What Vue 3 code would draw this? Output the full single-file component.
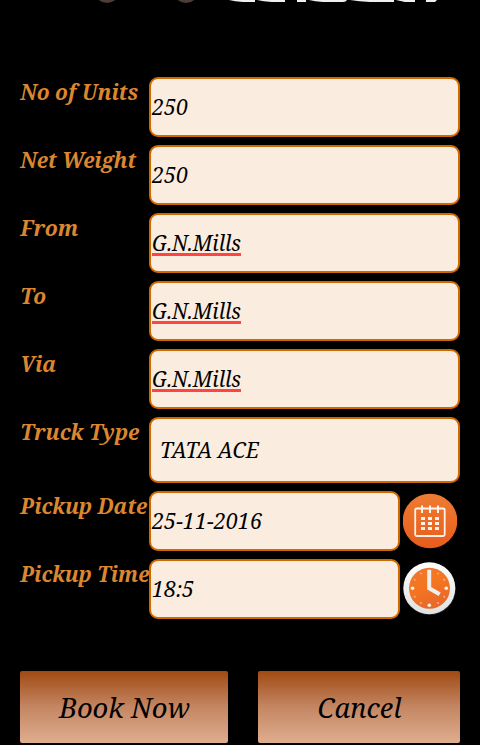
<script setup>
const fields = [
  { label: 'No of Units', lw: 118, value: '250', vw: 36 },
  { label: 'Net Weight', lw: 116, value: '250', vw: 36 },
  { label: 'From', lw: 58, value: 'G.N.Mills', vw: 89, flagged: true },
  { label: 'To', lw: 26, value: 'G.N.Mills', vw: 89, flagged: true },
  { label: 'Via', lw: 36, value: 'G.N.Mills', vw: 89, flagged: true },
  { label: 'Truck Type', lw: 119, value: 'TATA ACE', vw: 99, select: true },
  { label: 'Pickup Date', lw: 127, value: '25-11-2016', vw: 110, icon: 'calendar' },
  { label: 'Pickup Time', lw: 129, value: '18:5', vw: 42, icon: 'clock' },
]
const dots = [30, 60, 120, 150, 210, 240, 300, 330].map((a) => ({
  x: 26.5 + 17 * Math.sin((a * Math.PI) / 180),
  y: 26.5 - 17 * Math.cos((a * Math.PI) / 180),
}))
</script>

<template>
  <main class="screen">
    <svg class="banner" width="480" height="4" viewBox="0 0 480 4" aria-hidden="true">
      <g fill="#4d3c37"><circle cx="107" cy="-10" r="13" /><circle cx="186" cy="-10" r="13" /></g>
      <path fill="#edf2f1" d="M229 0H255V2H243Q235 1.5 229 0M257 0H285V2H272Q263 1.5 257 0M297 0H306V2H297ZM309 0H347Q346 2 343 2H323Q315 1.5 309 0M350 0H394V2H370Q359 1.5 350 0M396 0H415V2H405ZM426 0H437L435 2H426Z" />
    </svg>
    <form class="form" @submit.prevent>
      <div v-for="f in fields" :key="f.label" class="row" :class="{ tall: f.select }">
        <svg class="label" width="130" height="34"><text x="0.3" y="23.3" :textLength="f.lw" lengthAdjust="spacingAndGlyphs">{{ f.label }}</text></svg>
        <div class="field">
          <svg class="value" width="240" height="56">
            <text :x="f.select ? 9 : 1" :y="f.select ? 39.2 : 36.2" :textLength="f.vw" lengthAdjust="spacingAndGlyphs">{{ f.value }}</text>
            <rect v-if="f.flagged" x="1" y="38" width="89" height="3" fill="#ff4444" />
          </svg>
        </div>
        <svg v-if="f.icon === 'calendar'" class="icon" width="54" height="56" viewBox="0 0 54 56">
          <defs><linearGradient id="cal" x2="0" y2="1"><stop stop-color="#ee7c32" /><stop offset="1" stop-color="#e85c1c" /></linearGradient></defs>
          <circle cx="27" cy="28" r="27.3" fill="url(#cal)" />
          <rect x="12.2" y="15.5" width="29.5" height="27.5" rx="1.5" fill="none" stroke="#fff3e9" stroke-width="1.8" />
          <path d="M19 12.5V20M27 12.5V20M35 12.5V20" stroke="#fff3e9" stroke-width="2" />
          <g fill="#fff3e9">
            <template v-for="y in [24, 29, 34]" :key="y"><rect v-for="x in [18, 25, 32]" :key="x" :x="x" :y="y" width="4" height="3" /></template>
          </g>
        </svg>
        <svg v-if="f.icon === 'clock'" class="icon" width="54" height="56" viewBox="0 0 54 56">
          <defs>
            <linearGradient id="ring" x2="0" y2="1"><stop stop-color="#fff" /><stop offset="1" stop-color="#dfe0e1" /></linearGradient>
            <linearGradient id="face" x2=".4" y2="1"><stop stop-color="#ef7730" /><stop offset=".5" stop-color="#f5761f" /><stop offset="1" stop-color="#e9682a" /></linearGradient>
          </defs>
          <circle cx="26.8" cy="28" r="26" fill="#222" />
          <circle cx="26.3" cy="27.2" r="26" fill="url(#ring)" />
          <circle cx="26.5" cy="27.3" r="20.5" fill="url(#face)" />
          <g transform="translate(0 .8)">
            <circle v-for="(d, i) in dots" :key="i" :cx="d.x" :cy="d.y" r="1" fill="#f8b184" />
            <g fill="#fff0e5"><circle cx="9.5" cy="26.5" r="1.8" /><circle cx="43.3" cy="26.5" r="1.8" /><circle cx="26.3" cy="43.5" r="1.8" /></g>
            <path d="M26.2 8V26.5L36.7 32.5" fill="none" stroke="#f1eeeb" stroke-width="4" />
          </g>
        </svg>
      </div>
      <div class="actions">
        <button type="button" class="book"><svg width="208" height="72"><text x="39" y="47" textLength="131" lengthAdjust="spacingAndGlyphs">Book Now</text></svg></button>
        <button type="button" class="cancel"><svg width="202" height="72"><text x="59.5" y="47" textLength="84" lengthAdjust="spacingAndGlyphs">Cancel</text></svg></button>
      </div>
    </form>
  </main>
</template>

<style>
body { background: #000; overflow: hidden; }
</style>
<style scoped>
.screen { width: 480px; height: 745px; overflow: hidden; background: #000; font-family: "Noto Serif", "Droid Serif", "DejaVu Serif Condensed", "DejaVu Serif", serif; font-style: italic; }
svg { display: block; }
.form { display: flex; flex-direction: column; gap: 8px; padding: 73px 20px 0; }
.row { display: flex; height: 60px; }
.row.tall { height: 66px; }
.label { flex: 0 0 129px; width: 129px; overflow: visible; font-size: 21.3px; font-weight: bold; fill: #dc872f; }
.field { box-sizing: border-box; flex: 1; border: 2px solid #d06800; border-radius: 9px; background: #faecdf; }
.value { font-size: 21.6px; fill: #000; overflow: visible; }
.icon { flex: none; margin: 2px 3px 0; }
.actions { display: flex; gap: 30px; margin-top: 44px; }
button { display: block; width: 208px; height: 72px; padding: 0; border: 0; border-radius: 2px; background: linear-gradient(#a04a12, #c48663 50%, #dfae8e); font: inherit; font-size: 27.5px; color: #000; }
.cancel { width: 202px; }
</style>
